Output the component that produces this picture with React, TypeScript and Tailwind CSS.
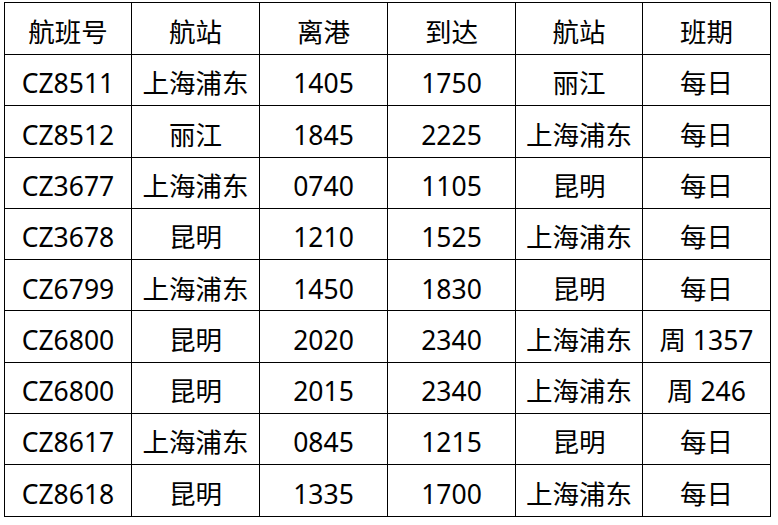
import React from "react";

const header = ["航班号", "航站", "离港", "到达", "航站", "班期"];

const rows = [
  ["CZ8511", "上海浦东", "1405", "1750", "丽江", "每日"],
  ["CZ8512", "丽江", "1845", "2225", "上海浦东", "每日"],
  ["CZ3677", "上海浦东", "0740", "1105", "昆明", "每日"],
  ["CZ3678", "昆明", "1210", "1525", "上海浦东", "每日"],
  ["CZ6799", "上海浦东", "1450", "1830", "昆明", "每日"],
  ["CZ6800", "昆明", "2020", "2340", "上海浦东", "周 1357"],
  ["CZ6800", "昆明", "2015", "2340", "上海浦东", "周 246"],
  ["CZ8617", "上海浦东", "0845", "1215", "昆明", "每日"],
  ["CZ8618", "昆明", "1335", "1700", "上海浦东", "每日"],
];

const widths = [127, 128, 128, 128, 127, 128];

export default function App() {
  return (
    <div className="w-[778px] h-[525px] bg-white pt-[2px] pl-[4px] font-['Noto_Sans','Noto_Sans_CJK_SC',sans-serif] text-black">
      <table className="table-fixed border-collapse w-[766px]">
        <colgroup>
          {widths.map((w, i) => (
            <col key={i} style={{ width: w }} />
          ))}
        </colgroup>
        <thead>
          <tr className="h-[52px]">
            {header.map((h, i) => (
              <th key={i} className="border border-black p-0 pt-[7px] font-normal text-[26.5px] leading-none text-center align-middle">
                {h}
              </th>
            ))}
          </tr>
        </thead>
        <tbody>
          {rows.map((r, ri) => (
            <tr key={ri} className="h-[51.3px]">
              {r.map((c, ci) => (
                <td key={ci} className="border border-black p-0 pt-[7px] text-[26.5px] leading-none text-center align-middle whitespace-nowrap">
                  {c}
                </td>
              ))}
            </tr>
          ))}
        </tbody>
      </table>
    </div>
  );
}
